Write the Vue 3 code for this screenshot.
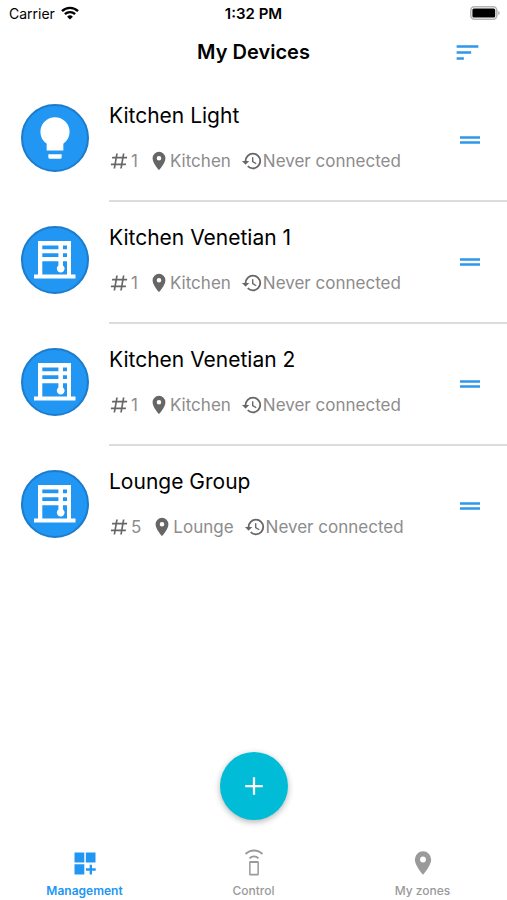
<template>
  <div class="screen">
    <div class="status-bar">
      <div class="carrier">
        <span>Carrier</span>
        <svg class="wifi" viewBox="0 0 18 14" aria-hidden="true">
          <path d="M1 5.2a11.4 11.4 0 0 1 16 0" />
          <path d="M3.9 8.2a7.3 7.3 0 0 1 10.2 0" />
          <path class="dot" d="M9 13.6 6.1 10.7a4.1 4.1 0 0 1 5.8 0z" />
        </svg>
      </div>
      <div class="time">1:32 PM</div>
      <div class="battery-wrap">
        <svg class="battery" viewBox="0 0 30 14" aria-hidden="true">
          <rect x="0.8" y="0.8" width="26" height="12.4" rx="3.6" fill="#fff" stroke="#b4b4b4" stroke-width="1.6" />
          <rect x="2.4" y="2.4" width="22.8" height="9.2" rx="1.6" fill="#000" />
          <path d="M28.2 4.8c2 .8 2 3.6 0 4.4z" fill="#b4b4b4" />
        </svg>
      </div>
    </div>

    <header class="header">
      <h1>My Devices</h1>
      <button class="sort" type="button" aria-label="Sort devices">
        <svg viewBox="0 0 24 24"><path :d="icons.sort" /></svg>
      </button>
    </header>

    <main class="content">
      <ul class="device-list">
        <li v-for="device in devices" :key="device.name" class="device">
          <div class="avatar">
            <svg v-if="device.type === 'light'" class="bulb" viewBox="0 0 24 24">
              <path :d="icons.bulb" />
            </svg>
            <svg v-else class="blind" viewBox="0 0 42 38">
              <path fill-rule="evenodd" :d="icons.blind" />
            </svg>
          </div>
          <div class="device-body">
            <div class="device-text">
              <h2>{{ device.name }}</h2>
              <div class="meta">
                <span class="meta-item">
                  <svg class="pound" viewBox="0 0 24 24"><path :d="icons.pound" /></svg>{{ device.count }}
                </span>
                <span class="meta-item">
                  <svg viewBox="0 0 24 24"><path :d="icons.marker" /></svg>{{ device.zone }}
                </span>
                <span class="meta-item">
                  <svg viewBox="0 0 24 24"><path :d="icons.history" /></svg>{{ device.status }}
                </span>
              </div>
            </div>
            <button class="handle" type="button" :aria-label="`Reorder ${device.name}`">
              <svg viewBox="0 0 24 24"><path :d="icons.handle" /></svg>
            </button>
          </div>
        </li>
      </ul>
    </main>

    <div class="fab-row">
      <button class="fab" type="button" aria-label="Add device">
        <svg viewBox="0 0 24 24"><path d="M19 12.9h-6.1V19h-1.8v-6.1H5v-1.8h6.1V5h1.8v6.1H19z" /></svg>
      </button>
    </div>

    <nav class="tabs">
      <a
        v-for="tab in tabs"
        :key="tab.label"
        href="#"
        :class="['tab', { active: tab.label === activeTab }]"
        @click.prevent="activeTab = tab.label"
      >
        <svg viewBox="0 0 24 24"><path fill-rule="evenodd" :d="tab.icon" /></svg>
        <span>{{ tab.label }}</span>
      </a>
    </nav>
  </div>
</template>

<script setup>
import { ref } from 'vue'

const icons = {
  sort: 'M3 18h6v-2H3v2zM3 6v2h18V6H3zm0 7h12v-2H3v2z',
  handle: 'M20 9H4v2h16V9zM4 15h16v-2H4v2z',
  bulb: 'M12 2a7 7 0 0 0-7 7c0 2.4 1.2 4.5 3 5.7V18h8v-3.3c1.8-1.2 3-3.3 3-5.7a7 7 0 0 0-7-7zM8.8 19.8h6.4v1.4a.8.8 0 0 1-.8.8H9.6a.8.8 0 0 1-.8-.8z',
  blind: 'M4 0H37V33.5H41.5V37.5H0V33.5H4zM8.3 4.5V8.3H24.4V4.5zM29 4.5V8.3H33V4.5zM8.3 12.2V16H24.4V12.2zM29 12.2V16H33V12.2zM8.3 20.2V33.5H33V20.2H29V24.4A3.9 3.9 0 1 1 24.4 24.4V20.2z',
  pound: 'M5.41 21L6.12 17H2.12L2.47 15H6.47L7.53 9H3.53L3.88 7H7.88L8.59 3H10.59L9.88 7H15.88L16.59 3H18.59L17.88 7H21.88L21.53 9H17.53L16.47 15H20.47L20.12 17H16.12L15.41 21H13.41L14.12 17H8.12L7.41 21H5.41M9.53 9L8.47 15H14.47L15.53 9H9.53Z',
  marker: 'M12 2a7 7 0 0 0-7 7c0 5.25 7 13 7 13s7-7.75 7-13a7 7 0 0 0-7-7zm0 9.5a2.5 2.5 0 1 1 0-5 2.5 2.5 0 0 1 0 5z',
  history: 'M13 3a9 9 0 0 0-9 9H1l3.89 3.89.07.14L9 12H6a7 7 0 1 1 7 7c-1.93 0-3.68-.79-4.94-2.06l-1.42 1.42A8.95 8.95 0 0 0 13 21a9 9 0 0 0 0-18zm-1 5v5l4.28 2.54.72-1.21-3.5-2.08V8H12z',
  widgets: 'M3 3h8.4v8.6H3zM12.7 3H21v8.6h-8.3zM3 13h8.4v8.8H3zM16 13.4h2v3.2h3.2v2H18v3.2h-2v-3.2h-3.2v-2H16z',
  remote: 'M9 10.2h6a1.2 1.2 0 0 1 1.2 1.2v10.2a1.2 1.2 0 0 1-1.2 1.2H9a1.2 1.2 0 0 1-1.2-1.2V11.4A1.2 1.2 0 0 1 9 10.2zM9.1 12v9.2h5.8V12zM7.6 7.4l1.1 1.1a4.7 4.7 0 0 1 6.6 0l1.1-1.1a6.2 6.2 0 0 0-8.8 0zM4.2 3.6l1.2 1.3a9.3 9.3 0 0 1 13.2 0l1.2-1.3a11 11 0 0 0-15.6 0z'
}

const devices = [
  { name: 'Kitchen Light', type: 'light', count: 1, zone: 'Kitchen', status: 'Never connected' },
  { name: 'Kitchen Venetian 1', type: 'blind', count: 1, zone: 'Kitchen', status: 'Never connected' },
  { name: 'Kitchen Venetian 2', type: 'blind', count: 1, zone: 'Kitchen', status: 'Never connected' },
  { name: 'Lounge Group', type: 'blind', count: 5, zone: 'Lounge', status: 'Never connected' }
]

const tabs = [
  { label: 'Management', icon: icons.widgets },
  { label: 'Control', icon: icons.remote },
  { label: 'My zones', icon: icons.marker }
]

const activeTab = ref('Management')
</script>

<style>
body {
  margin: 0;
  background: #fff;
}
</style>

<style scoped>
.screen {
  display: flex;
  flex-direction: column;
  min-height: 100vh;
  background: #fff;
  color: #000;
  font-family: Inter, 'Liberation Sans', sans-serif;
}

button {
  display: flex;
  align-items: center;
  justify-content: center;
  padding: 0;
  border: 0;
  background: none;
  cursor: pointer;
}

svg {
  display: block;
  flex: none;
  fill: currentColor;
}

.status-bar {
  display: grid;
  grid-template-columns: 1fr auto 1fr;
  align-items: center;
  height: 26px;
  padding: 0 7px;
  font-size: 14px;
}

.carrier {
  display: flex;
  align-items: center;
  gap: 6px;
  padding-left: 2px;
}

.wifi {
  width: 18px;
  height: 14px;
  fill: none;
  stroke: #000;
  stroke-width: 2.4;
}

.wifi .dot {
  fill: #000;
  stroke: none;
}

.time {
  font-size: 15px;
  font-weight: 600;
}

.battery-wrap {
  display: flex;
  justify-content: flex-end;
}

.battery {
  width: 30px;
  height: 14px;
}

.header {
  display: grid;
  grid-template-columns: 1fr auto 1fr;
  align-items: center;
  height: 52px;
  padding: 0 25px;
}

.header h1 {
  grid-column: 2;
  margin: 0;
  font-size: 20px;
  font-weight: 600;
}

.sort {
  justify-self: end;
  color: #2e97ea;
}

.sort svg {
  width: 29px;
  height: 29px;
}

.content {
  flex: 1;
  padding-top: 2px;
}

.device-list {
  margin: 0;
  padding: 0;
  list-style: none;
}

.device {
  display: flex;
  gap: 20px;
  padding-left: 21px;
}

.avatar {
  display: flex;
  align-items: center;
  justify-content: center;
  box-sizing: border-box;
  flex: none;
  width: 68px;
  height: 68px;
  margin-top: 24px;
  border: 2px solid #1c7ccc;
  border-radius: 50%;
  background: #2196f3;
  color: #fff;
}

.bulb {
  width: 50px;
  height: 50px;
}

.blind {
  width: 42px;
  height: 38px;
}

.device-body {
  display: flex;
  align-items: center;
  flex: 1;
  min-width: 0;
  padding-right: 22px;
  border-bottom: 2px solid #dcdcdc;
}

.device:last-child .device-body {
  border-bottom-color: transparent;
}

.device-text {
  flex: 1;
  padding: 20px 0 25px;
}

.device h2 {
  margin: 0 0 15px;
  font-size: 21px;
  font-weight: 400;
  line-height: 32px;
}

.meta {
  display: flex;
  gap: 10px;
  color: #8c8c8c;
  font-size: 17px;
  line-height: 28px;
}

.meta-item {
  display: flex;
  align-items: center;
}

.meta svg {
  width: 22px;
  height: 22px;
  color: #666;
}

.meta .pound {
  width: 20px;
  height: 20px;
  margin-right: 2px;
}

.handle {
  color: #2e97ea;
}

.handle svg {
  width: 30px;
  height: 30px;
}

.fab-row {
  display: flex;
  justify-content: center;
  padding-bottom: 22px;
}

.fab {
  width: 68px;
  height: 68px;
  border-radius: 50%;
  background: #00bcd7;
  box-shadow: 0 2px 6px rgba(0, 0, 0, 0.3);
  color: #fff;
}

.fab svg {
  width: 30px;
  height: 30px;
}

.tabs {
  display: flex;
  height: 58px;
}

.tab {
  display: flex;
  flex-direction: column;
  align-items: center;
  flex: 1;
  gap: 5px;
  padding-top: 7px;
  color: #9a9a9a;
  font-size: 12px;
  font-weight: 500;
  line-height: 18px;
  text-decoration: none;
}

.tab svg {
  width: 28px;
  height: 28px;
}

.tab.active {
  color: #2196f3;
  font-weight: 600;
}
</style>
